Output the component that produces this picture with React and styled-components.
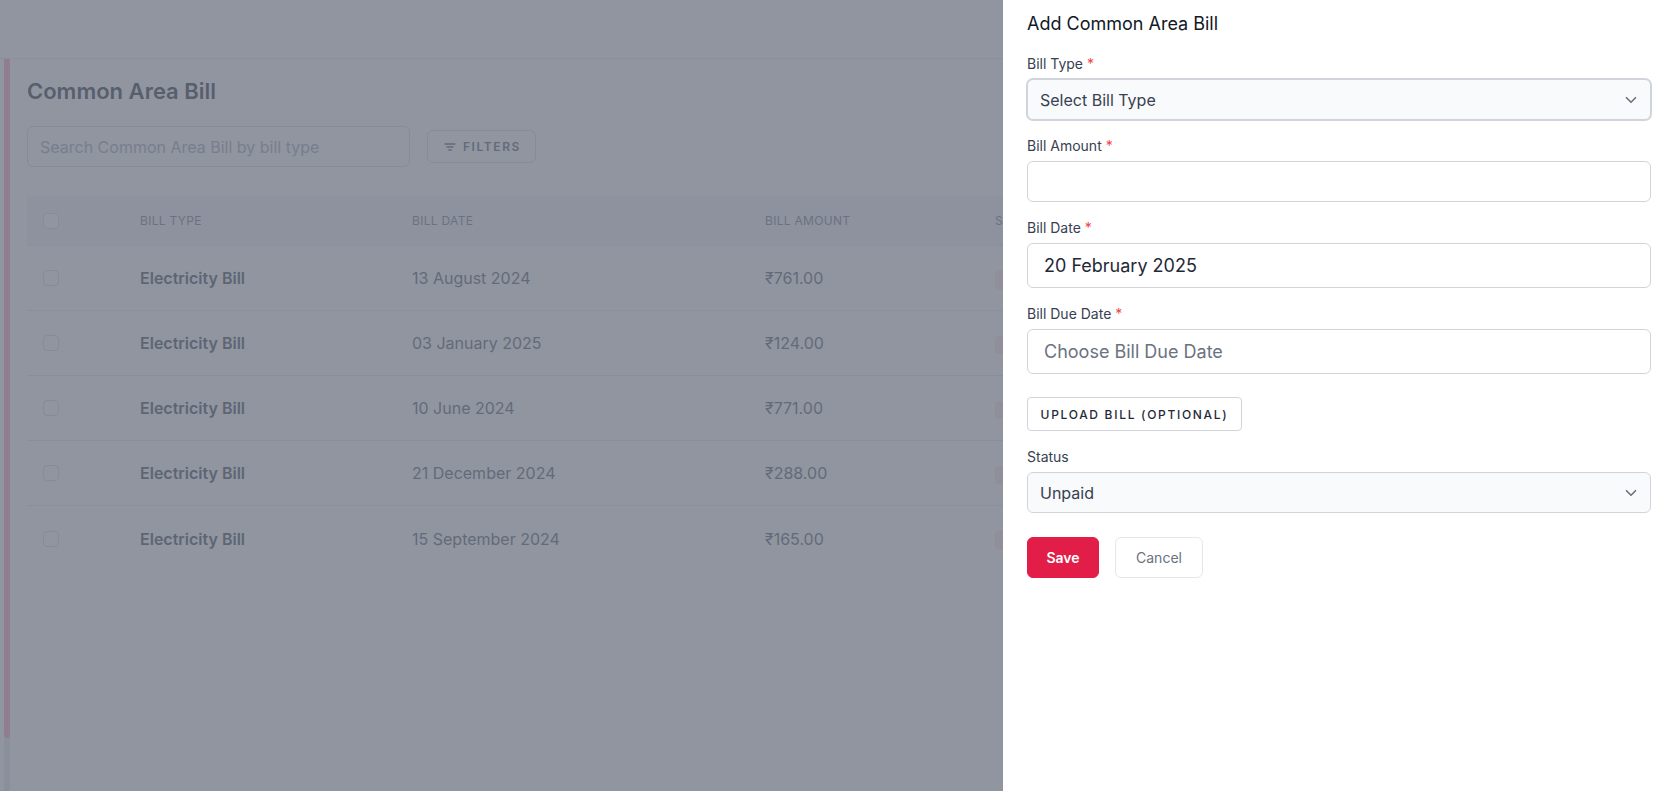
import React from 'react';
import styled, { createGlobalStyle } from 'styled-components';

const GlobalStyle = createGlobalStyle`
  * { box-sizing: border-box; }
  html, body {
    margin: 0;
    padding: 0;
    height: 100%;
    background: #ffffff;
    font-family: Inter, "Noto Sans", "Liberation Sans", sans-serif;
    overflow: hidden;
  }
  #root { height: 100%; }
`;

const bills = [
  { type: 'Electricity Bill', date: '13 August 2024', amount: '₹761.00' },
  { type: 'Electricity Bill', date: '03 January 2025', amount: '₹124.00' },
  { type: 'Electricity Bill', date: '10 June 2024', amount: '₹771.00' },
  { type: 'Electricity Bill', date: '21 December 2024', amount: '₹288.00' },
  { type: 'Electricity Bill', date: '15 September 2024', amount: '₹165.00' },
];

const Page = styled.div`
  height: 791px;
  display: flex;
  flex-direction: column;
  background: #ffffff;
`;

const TopBar = styled.header`
  height: 59px;
  flex-shrink: 0;
  background: #ffffff;
  border-bottom: 1px solid #e5e7eb;
`;

const Body = styled.div`
  flex: 1;
  display: flex;
`;

const Rail = styled.div`
  width: 10px;
  padding-left: 4px;
  display: flex;
  flex-direction: column;
`;

const RailTrack = styled.div`
  width: 6px;
  flex: 1;
  display: flex;
  flex-direction: column;
  background: #e5e7eb;
`;

const RailThumb = styled.div`
  height: 679px;
  background: #f9a8b8;
  border-radius: 0 0 3px 3px;
`;

const Main = styled.main`
  flex: 1;
  padding: 18px 27px 0 17px;
`;

const Title = styled.h1`
  margin: 0;
  font-size: 22px;
  line-height: 28px;
  font-weight: 600;
  color: #1f2937;
`;

const Toolbar = styled.div`
  margin-top: 21px;
  display: flex;
  align-items: center;
  gap: 17px;
`;

const Search = styled.input`
  width: 383px;
  height: 41px;
  padding: 0 12px;
  border: 1px solid #d1d5db;
  border-radius: 6px;
  font-family: inherit;
  font-size: 16px;
  color: #374151;
  background: #ffffff;
  outline: none;
  &::placeholder { color: #9ca3af; }
`;

const FilterButton = styled.button`
  height: 33px;
  width: 109px;
  display: flex;
  align-items: center;
  justify-content: center;
  gap: 7px;
  border: 1px solid #d1d5db;
  border-radius: 6px;
  background: #ffffff;
  font-family: inherit;
  font-size: 12px;
  font-weight: 600;
  letter-spacing: 1.6px;
  color: #4b5563;
  padding: 0 0 0 2px;
`;

const Table = styled.div`
  margin-top: 29px;
`;

const Row = styled.div`
  display: grid;
  grid-template-columns: 97px 272px 353px 230px 1fr;
  align-items: center;
  height: ${(p) => (p.$head ? '50px' : '65px')};
  background: ${(p) => (p.$head ? '#f3f4f6' : '#ffffff')};
  border-bottom: ${(p) => (p.$last ? 'none' : '1px solid #e5e7eb')};
`;

const Cell = styled.div`
  padding-left: 16px;
  font-size: ${(p) => (p.$head ? '12px' : '16px')};
  font-weight: ${(p) => (p.$bold ? 600 : 400)};
  letter-spacing: ${(p) => (p.$head ? '0.3px' : '0')};
  text-transform: ${(p) => (p.$head ? 'uppercase' : 'none')};
  color: ${(p) => (p.$head ? '#6b7280' : p.$bold ? '#374151' : '#4b5563')};
  white-space: nowrap;
`;

const Check = styled.span`
  display: block;
  width: 16px;
  height: 16px;
  border: 1px solid #d1d5db;
  border-radius: 4px;
  background: #ffffff;
`;

const Badge = styled.span`
  display: inline-block;
  padding: 0 10px;
  height: 18px;
  line-height: 18px;
  border-radius: 4px;
  font-size: 12px;
  background: #fee2e2;
  color: #b91c1c;
`;

const Overlay = styled.div`
  position: fixed;
  inset: 0;
  background: rgba(107, 114, 128, 0.75);
`;

const Drawer = styled.aside`
  position: fixed;
  top: 0;
  right: 0;
  bottom: 0;
  width: 672px;
  background: #ffffff;
  padding: 10px 24px 24px;
  display: flex;
  flex-direction: column;
`;

const DrawerTitle = styled.h2`
  margin: 0 0 16px;
  font-size: 18px;
  line-height: 28px;
  font-weight: 400;
  color: #111827;
`;

const Field = styled.div`
  display: flex;
  flex-direction: column;
  gap: 5px;
  margin-bottom: ${(p) => p.$gap || '16px'};
`;

const Label = styled.label`
  font-size: 14px;
  line-height: 20px;
  font-weight: 400;
  color: #374151;
  span { color: #ef4444; }
`;

const SelectBox = styled.div`
  position: relative;
  height: 41px;
  display: flex;
  align-items: center;
  padding: 0 12px;
  border: 1px solid #d1d5db;
  border-radius: 6px;
  background: #f9fafb;
  box-shadow: ${(p) => (p.$strong ? '0 0 0 1px #d1d5db' : 'none')};
  font-size: 16px;
  color: #374151;
  svg {
    position: absolute;
    right: 10px;
    top: 50%;
    transform: translateY(-50%);
  }
`;

const TextInput = styled.input`
  height: ${(p) => (p.$tall ? '45px' : '41px')};
  padding: 0 16px;
  border: 1px solid #d1d5db;
  border-radius: 6px;
  background: #ffffff;
  font-family: inherit;
  font-size: 18px;
  color: #1f2937;
  outline: none;
  &::placeholder { color: #6b7280; }
`;

const UploadButton = styled.button`
  align-self: flex-start;
  height: 34px;
  width: 215px;
  margin: 23px 0 16px;
  border: 1px solid #d1d5db;
  border-radius: 4px;
  background: #ffffff;
  font-family: inherit;
  font-size: 12px;
  font-weight: 500;
  letter-spacing: 1.7px;
  color: #1f2937;
`;

const Actions = styled.div`
  margin-top: 24px;
  display: flex;
  gap: 16px;
`;

const Button = styled.button`
  height: 41px;
  width: ${(p) => (p.$primary ? '72px' : '88px')};
  border-radius: 6px;
  border: 1px solid ${(p) => (p.$primary ? '#e11d48' : '#e5e7eb')};
  background: ${(p) => (p.$primary ? '#e11d48' : '#ffffff')};
  color: ${(p) => (p.$primary ? '#ffffff' : '#6b7280')};
  font-family: inherit;
  font-size: 14px;
  font-weight: ${(p) => (p.$primary ? 600 : 400)};
`;

const Chevron = () => (
  <svg width="18" height="18" viewBox="0 0 24 24" fill="none" stroke="#6b7280" strokeWidth="2.2" strokeLinecap="round" strokeLinejoin="round">
    <path d="M6 9l6 6 6-6" />
  </svg>
);

const FilterIcon = () => (
  <svg width="12" height="12" viewBox="0 0 12 12" fill="none" stroke="#4b5563" strokeWidth="1.3" strokeLinecap="round">
    <path d="M1 3h10M3 6h6M4.8 9h2.4" />
  </svg>
);

export default function App() {
  return (
    <>
      <GlobalStyle />
      <Page>
        <TopBar />
        <Body>
          <Rail>
            <RailTrack>
              <RailThumb />
            </RailTrack>
          </Rail>
          <Main>
            <Title>Common Area Bill</Title>
            <Toolbar>
              <Search placeholder="Search Common Area Bill by bill type" readOnly />
              <FilterButton>
                <FilterIcon />
                FILTERS
              </FilterButton>
            </Toolbar>
            <Table>
              <Row $head>
                <Cell $head><Check /></Cell>
                <Cell $head>Bill Type</Cell>
                <Cell $head>Bill Date</Cell>
                <Cell $head>Bill Amount</Cell>
                <Cell $head>Status</Cell>
              </Row>
              {bills.map((b, i) => (
                <Row key={i} $last={i === bills.length - 1}>
                  <Cell><Check /></Cell>
                  <Cell $bold>{b.type}</Cell>
                  <Cell>{b.date}</Cell>
                  <Cell>{b.amount}</Cell>
                  <Cell><Badge>Unpaid</Badge></Cell>
                </Row>
              ))}
            </Table>
          </Main>
        </Body>
      </Page>

      <Overlay />

      <Drawer>
        <DrawerTitle>Add Common Area Bill</DrawerTitle>

        <Field>
          <Label>Bill Type <span>*</span></Label>
          <SelectBox $strong>
            Select Bill Type
            <Chevron />
          </SelectBox>
        </Field>

        <Field>
          <Label>Bill Amount <span>*</span></Label>
          <TextInput readOnly />
        </Field>

        <Field>
          <Label>Bill Date <span>*</span></Label>
          <TextInput $tall readOnly value="20 February 2025" />
        </Field>

        <Field $gap="0">
          <Label>Bill Due Date <span>*</span></Label>
          <TextInput $tall readOnly placeholder="Choose Bill Due Date" />
        </Field>

        <UploadButton>UPLOAD BILL (OPTIONAL)</UploadButton>

        <Field $gap="0">
          <Label>Status</Label>
          <SelectBox>
            Unpaid
            <Chevron />
          </SelectBox>
        </Field>

        <Actions>
          <Button $primary>Save</Button>
          <Button>Cancel</Button>
        </Actions>
      </Drawer>
    </>
  );
}
